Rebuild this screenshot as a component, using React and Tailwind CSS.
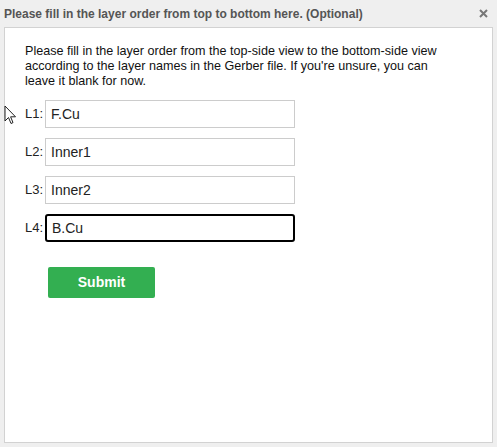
import React, { useState } from 'react'

const LAYERS = [
  { id: 'L1', value: 'F.Cu' },
  { id: 'L2', value: 'Inner1' },
  { id: 'L3', value: 'Inner2' },
  { id: 'L4', value: 'B.Cu', focused: true },
]

function Cursor() {
  return (
    <svg className="absolute left-[4px] top-[105px]" width="13" height="20" viewBox="0 0 13 20">
      <path d="M1 1 L1 16 L4.5 12.5 L7 18.5 L9 17.6 L6.6 11.8 L11.5 11.8 Z" fill="#fff" stroke="#222" strokeWidth="1" strokeLinejoin="round" />
    </svg>
  )
}

export default function App() {
  const [vals, setVals] = useState(LAYERS.map(l => l.value))

  return (
    <div className="relative w-[497px] h-[447px] bg-[#efefef] overflow-hidden" style={{ fontFamily: '"Liberation Sans", Arial, sans-serif' }}>
      <div className="flex items-center justify-between h-[27px] pl-[4px] pr-[9px]">
        <div className="text-[12px] font-bold text-[#555]">Please fill in the layer order from top to bottom here. (Optional)</div>
        <svg width="9" height="9" viewBox="0 0 9 9">
          <path d="M1 1 L8 8 M8 1 L1 8" stroke="#777" strokeWidth="2" />
        </svg>
      </div>

      <div className="mx-[4px] w-[489px] h-[416px] bg-white border border-[#d2d2d2] pl-[20px] pt-[16px]">
        <p className="text-[12.6px] leading-[15px] text-[#111]">
          Please fill in the layer order from the top-side view to the bottom-side view<br />
          according to the layer names in the Gerber file. If you're unsure, you can<br />
          leave it blank for now.
        </p>

        <div className="mt-[11px] flex flex-col gap-[10px]">
          {LAYERS.map((l, i) => (
            <div key={l.id} className="flex items-center gap-[4px]">
              <span className="text-[13px] text-[#222] w-[16px]">{l.id}:</span>
              <input
                value={vals[i]}
                onChange={e => setVals(v => v.map((x, j) => (j === i ? e.target.value : x)))}
                className={`w-[250px] h-[28px] px-[5px] text-[14px] text-[#222] outline-none ${l.focused ? 'border-2 border-black rounded-[3px] px-[4px]' : 'border border-[#cccccc]'}`}
              />
            </div>
          ))}
        </div>

        <button className="mt-[25px] ml-[23px] w-[107px] h-[31px] bg-[#33af51] text-white text-[14px] font-bold rounded-[2px]">
          Submit
        </button>
      </div>

      <Cursor />
    </div>
  )
}
